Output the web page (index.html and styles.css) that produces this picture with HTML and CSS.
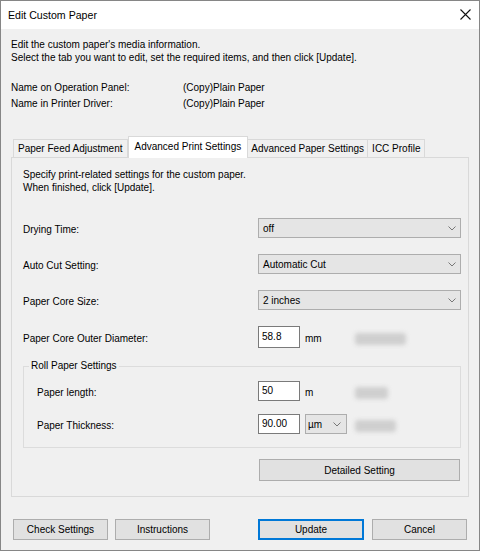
FILE: index.html
```html
<!DOCTYPE html>
<html lang="en">
<head>
  <meta charset="UTF-8" />
  <meta name="viewport" content="width=device-width, initial-scale=1.0"/>
  <title>Edit Custom Paper</title>
  <link rel="stylesheet" href="styles.css">
</head>
<body>
  <div class="dialog">
    <div class="title-bar">
      <span class="title">Edit Custom Paper</span>
      <button class="close-btn" aria-label="Close">
        <svg width="11" height="11" viewBox="0 0 11 11"><path d="M0.5 0.5L10.5 10.5M10.5 0.5L0.5 10.5" stroke="#111" stroke-width="1.1" fill="none"/></svg>
      </button>
    </div>

    <div class="dialog-body">
      <p class="intro">Edit the custom paper's media information.<br>Select the tab you want to edit, set the required items, and then click [Update].</p>

      <div class="names">
        <div class="name-row">
          <span class="name-label">Name on Operation Panel:</span>
          <span>(Copy)Plain Paper</span>
        </div>
        <div class="name-row">
          <span class="name-label">Name in Printer Driver:</span>
          <span>(Copy)Plain Paper</span>
        </div>
      </div>

      <div class="tab-strip">
        <div class="tab">Paper Feed Adjustment</div>
        <div class="tab active">Advanced Print Settings</div>
        <div class="tab tab-narrow">Advanced Paper Settings</div>
        <div class="tab">ICC Profile</div>
      </div>

      <div class="tab-page">
        <p class="page-intro">Specify print-related settings for the custom paper.<br>When finished, click [Update].</p>

        <div class="settings">
          <div class="field-row">
            <label class="field-label">Drying Time:</label>
            <div class="combo">
              <span>off</span>
              <svg class="chevron" width="8" height="5" viewBox="0 0 8 5"><path d="M0.5 0.5L4 4L7.5 0.5" stroke="#777" fill="none"/></svg>
            </div>
          </div>
          <div class="field-row">
            <label class="field-label">Auto Cut Setting:</label>
            <div class="combo">
              <span>Automatic Cut</span>
              <svg class="chevron" width="8" height="5" viewBox="0 0 8 5"><path d="M0.5 0.5L4 4L7.5 0.5" stroke="#777" fill="none"/></svg>
            </div>
          </div>
          <div class="field-row">
            <label class="field-label">Paper Core Size:</label>
            <div class="combo">
              <span>2 inches</span>
              <svg class="chevron" width="8" height="5" viewBox="0 0 8 5"><path d="M0.5 0.5L4 4L7.5 0.5" stroke="#777" fill="none"/></svg>
            </div>
          </div>
          <div class="field-row">
            <label class="field-label">Paper Core Outer Diameter:</label>
            <input class="num-input tall" type="text" value="58.8" />
            <span class="unit">mm</span>
            <span class="blurred" style="width: 51px"></span>
          </div>
        </div>

        <fieldset class="group-box">
          <legend>Roll Paper Settings</legend>
          <div class="field-row">
            <label class="field-label">Paper length:</label>
            <input class="num-input" type="text" value="50" />
            <span class="unit">m</span>
            <span class="blurred" style="width: 33px"></span>
          </div>
          <div class="field-row">
            <label class="field-label">Paper Thickness:</label>
            <input class="num-input" type="text" value="90.00" />
            <div class="combo unit-combo">
              <span>µm</span>
              <svg class="chevron" width="8" height="5" viewBox="0 0 8 5"><path d="M0.5 0.5L4 4L7.5 0.5" stroke="#777" fill="none"/></svg>
            </div>
            <span class="blurred" style="width: 41px"></span>
          </div>
        </fieldset>

        <button class="btn detail-btn">Detailed Setting</button>
      </div>

      <div class="dialog-buttons">
        <div class="btn-group">
          <button class="btn">Check Settings</button>
          <button class="btn">Instructions</button>
        </div>
        <div class="btn-group right">
          <button class="btn btn-default">Update</button>
          <button class="btn">Cancel</button>
        </div>
      </div>
    </div>
  </div>
</body>
</html>
```

FILE: styles.css
```css
* {
  box-sizing: border-box;
}

body {
  margin: 0;
  font-family: "Liberation Sans", Arial, sans-serif;
  font-size: 10px;
  color: #000;
  background: #f0f0f0;
}

.dialog {
  width: 480px;
  height: 551px;
  border: 1px solid #868686;
  display: flex;
  flex-direction: column;
  background: #f0f0f0;
}

.title-bar {
  height: 28px;
  background: #fff;
  display: flex;
  align-items: center;
  justify-content: space-between;
  padding: 0 8px 0 7px;
}

.title {
  font-size: 10.6px;
}

.close-btn {
  border: none;
  background: transparent;
  padding: 0;
  width: 11px;
  height: 11px;
  display: flex;
  margin-top: -1px;
}

.dialog-body {
  flex: 1;
  padding: 9px 10px 0;
}

.intro {
  margin: 0;
  line-height: 13px;
}

.names {
  margin-top: 16px;
}

.name-row {
  display: flex;
  line-height: 16px;
}

.name-label {
  width: 172px;
}

/* tabs */
.tab-strip {
  display: flex;
  align-items: flex-end;
  height: 21px;
  margin-top: 24px;
  padding-left: 2px;
  position: relative;
  z-index: 1;
}

.tab {
  height: 18px;
  line-height: 17px;
  padding: 0 4px;
  border: 1px solid #d9d9d9;
  border-bottom: none;
  background: #f0f0f0;
  white-space: nowrap;
}

.tab + .tab {
  border-left: none;
}

.tab.active {
  height: 22px;
  line-height: 20px;
  margin-bottom: -1px;
  padding: 0 6px;
  background: #fff;
  border-left: 1px solid #d9d9d9;
}

.tab.active + .tab {
  border-left: none;
}

.tab-narrow {
  padding: 0 3px;
}

.tab-page {
  border: 1px solid #d9d9d9;
  padding: 10px 7px 15px 11px;
  display: flex;
  flex-direction: column;
}

.page-intro {
  margin: 0;
  line-height: 13px;
}

.settings {
  margin-top: 24px;
  display: flex;
  flex-direction: column;
  gap: 16px;
}

.field-row {
  display: flex;
  align-items: center;
}

.field-label {
  width: 235px;
  padding-top: 3px;
}

.combo {
  width: 203px;
  height: 20px;
  background: #e5e5e5;
  border: 1px solid #adadad;
  display: flex;
  align-items: center;
  justify-content: space-between;
  padding: 0 4px 0 4px;
}

.num-input {
  width: 42px;
  height: 20px;
  border: 1px solid #7a7a7a;
  background: #fff;
  font-family: inherit;
  font-size: 10px;
  padding: 0 0 2px 3px;
  margin: 0;
  outline: none;
}

.num-input.tall {
  height: 22px;
}

.unit {
  width: 42px;
  margin-left: 5px;
  padding-top: 3px;
}

.unit-combo {
  width: 42px;
  margin-left: 5px;
  padding: 0 5px 0 2px;
}

.blurred {
  height: 12px;
  margin-left: 8px;
  margin-top: 4px;
  border-radius: 3px;
  background: #cfcfcf;
  filter: blur(2px);
}

.group-box {
  margin: 12px 0 0;
  border: 1px solid #dcdcdc;
  padding: 9px 7px 13px 13px;
  display: flex;
  flex-direction: column;
  gap: 13px;
}

.group-box legend {
  line-height: 12px;
  padding: 0 2px;
  margin-left: -8px;
}

.group-box .field-label {
  width: 221px;
}

/* buttons */
.btn {
  height: 21px;
  width: 95px;
  background: #e1e1e1;
  border: 1px solid #adadad;
  font-family: inherit;
  font-size: 10px;
  color: #000;
  padding: 0;
}

.detail-btn {
  width: 201px;
  height: 22px;
  margin: 11px 0 0 236px;
}

.dialog-buttons {
  display: flex;
  justify-content: space-between;
  margin-top: 22px;
  padding: 0 2px;
}

.btn-group {
  display: flex;
  gap: 7px;
}

.btn-group.right {
  gap: 8px;
}

.btn-default {
  width: 106px;
  border-color: #0078d7;
  box-shadow: inset 0 0 0 1px #0078d7;
}
```
